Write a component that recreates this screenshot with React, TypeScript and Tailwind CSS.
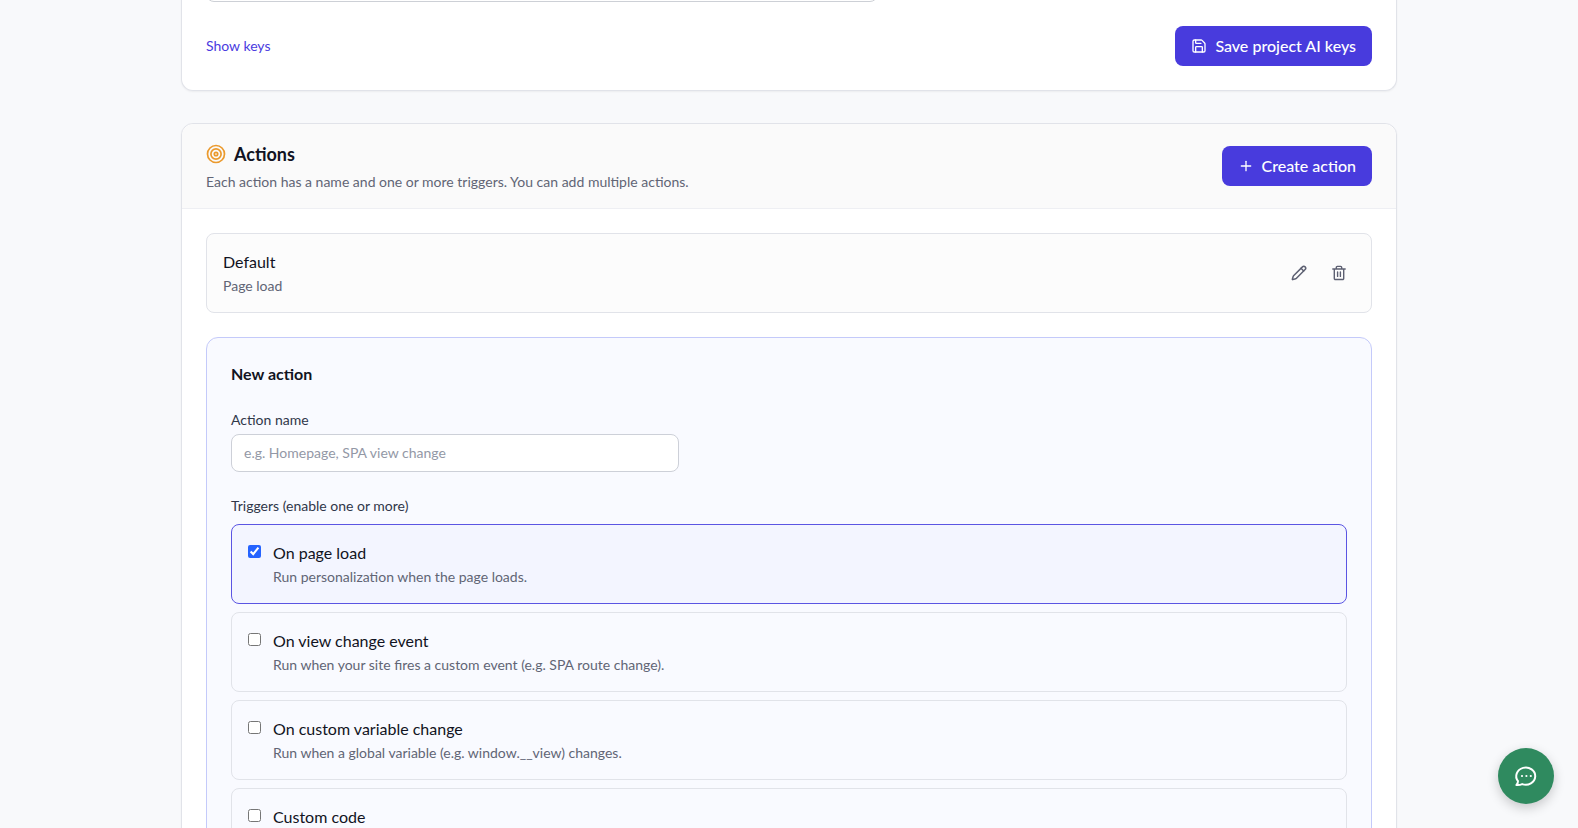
import { useState } from "react"
import { Pencil, Plus, Save } from "lucide-react"

type Trigger = {
  id: string
  title: string
  description?: string
}

const triggers: Trigger[] = [
  { id: "page-load", title: "On page load", description: "Run personalization when the page loads." },
  { id: "view-change", title: "On view change event", description: "Run when your site fires a custom event (e.g. SPA route change)." },
  { id: "variable-change", title: "On custom variable change", description: "Run when a global variable (e.g. window.__view) changes." },
  { id: "custom-code", title: "Custom code" },
]

const TargetIcon = () => (
  <svg className="size-5 text-[#eb9a2d]" viewBox="0 0 20 20" fill="none" stroke="currentColor" aria-hidden="true">
    <circle cx="10" cy="10" r="8.5" strokeWidth="1.7" />
    <circle cx="10" cy="10" r="5.1" strokeWidth="1.7" />
    <circle cx="10" cy="10" r="1.7" strokeWidth="1.7" />
  </svg>
)

const TrashIcon = () => (
  <svg className="size-4" viewBox="0 0 16 16" fill="none" stroke="currentColor" strokeWidth="1.4" strokeLinecap="round" strokeLinejoin="round" aria-hidden="true">
    <path d="M1.8 4h12.400M3.300 4v9.400a1.100 1.100 0 0 0 1.100 1.100h7.200a1.100 1.100 0 0 0 1.100-1.100V4M5.300 4V2.400a1 1 0 0 1 1-1h3.400a1 1 0 0 1 1 1V4M6.600 7v4.400M9.400 7v4.400" />
  </svg>
)

const ChatIcon = () => (
  <svg className="size-6" viewBox="0 0 24 24" fill="none" stroke="currentColor" strokeWidth="2" strokeLinecap="round" strokeLinejoin="round" aria-hidden="true">
    <path d="M2.400 21c1-.9 1.600-2.200 1.600-3.900A9.500 8.600 0 1 1 8.200 20.100c-1.700.8-3.600 1.100-5.800.9Z" />
    <path d="M8 12h.01M12.400 12h.01M16.800 12h.01" strokeWidth="2.2" />
  </svg>
)

const App = () => {
  const [name, setName] = useState("")
  const [apiKey, setApiKey] = useState("")
  const [showKeys, setShowKeys] = useState(false)
  const [enabled, setEnabled] = useState<string[]>(["page-load"])

  const toggle = (id: string) => {
    setEnabled(enabled.includes(id) ? enabled.filter(e => e !== id) : [...enabled, id])
  }

  return (
    <div className="h-screen overflow-y-auto [scrollbar-width:none] bg-[#f8f9fb] font-['Lato',sans-serif] text-[#111322]">
      <main className="mx-auto max-w-7xl px-8">
        <section className="rounded-b-xl border border-t-0 border-[#e1e3e9] bg-white px-6 pb-6 shadow-xs">
          {/* last key field, scrolled almost out of view */}
          <input
            type={showKeys ? "text" : "password"}
            aria-label="API key"
            value={apiKey}
            onChange={e => setApiKey(e.target.value)}
            className="-mt-9 block h-[38px] w-full max-w-2xl rounded-lg border border-[#cdd0d6] px-3 text-sm"
          />
          <div className="flex items-center justify-between pt-6">
            <button type="button" onClick={() => setShowKeys(!showKeys)} className="text-sm text-[#4a3ce0]">Show keys</button>
            <button type="button" className="flex h-10 items-center gap-2 rounded-lg bg-[#483bdd] px-4 font-medium text-white">
              <Save className="size-4" />
              Save project AI keys
            </button>
          </div>
        </section>

        <section className="my-8 rounded-xl border border-[#e1e3e9] bg-white shadow-xs">
          <header className="flex items-center justify-between rounded-t-xl border-b border-[#eeeff3] bg-[#fafafa] px-6 py-4">
            <div>
              <h2 className="flex items-center gap-2 text-lg leading-7 font-bold">
                <TargetIcon />
                Actions
              </h2>
              <p className="mt-1 text-sm text-[#616575]">Each action has a name and one or more triggers. You can add multiple actions.</p>
            </div>
            <button type="button" className="flex h-10 items-center gap-2 rounded-lg bg-[#483bdd] px-4 font-medium text-white">
              <Plus className="size-4" />
              Create action
            </button>
          </header>

          <div className="p-6">
            <div className="flex items-center justify-between rounded-lg border border-[#e1e3e9] bg-[#fcfcfc] p-4">
              <div>
                <p>Default</p>
                <p className="mt-0.5 text-sm text-[#616575]">Page load</p>
              </div>
              <div className="flex gap-2 text-[#5d6072]">
                <button type="button" aria-label="Edit action" className="p-2"><Pencil className="size-4" strokeWidth={2.2} /></button>
                <button type="button" aria-label="Delete action" className="p-2"><TrashIcon /></button>
              </div>
            </div>

            <form className="mt-6 rounded-xl border border-[#c4cafa] bg-[#f9faff] p-6" onSubmit={e => e.preventDefault()}>
              <h3 className="font-bold">New action</h3>
              <div className="mt-6">
                <label htmlFor="action-name" className="block text-sm text-[#30374a]">Action name</label>
                <input
                  id="action-name"
                  type="text"
                  value={name}
                  onChange={e => setName(e.target.value)}
                  placeholder="e.g. Homepage, SPA view change"
                  className="mt-1 block w-full max-w-md rounded-lg border border-[#cdd0d8] bg-white px-3 py-2 text-sm placeholder:text-[#9398a6]"
                />
              </div>
              <fieldset className="mt-6">
                <legend className="text-sm text-[#30374a]">Triggers (enable one or more)</legend>
                <div className="mt-2 flex flex-col gap-2">
                  {triggers.map(t => (
                    <label
                      key={t.id}
                      htmlFor={t.id}
                      className={`flex items-start gap-3 rounded-lg border p-4 ${enabled.includes(t.id) ? "border-[#5b55e3] bg-[#f3f5ff]" : "border-[#e1e3e9]"}`}
                    >
                      <input
                        id={t.id}
                        type="checkbox"
                        checked={enabled.includes(t.id)}
                        onChange={() => toggle(t.id)}
                        className="mt-1 size-[13px] accent-[#2563ff]"
                      />
                      <span>
                        <span className="block">{t.title}</span>
                        {t.description && <span className="mt-0.5 block text-sm text-[#616575]">{t.description}</span>}
                      </span>
                    </label>
                  ))}
                </div>
              </fieldset>
            </form>
          </div>
        </section>
      </main>

      <button type="button" aria-label="Open chat" className="fixed right-6 bottom-6 flex size-14 items-center justify-center rounded-full bg-[#2f8a5f] text-white shadow-[0_4px_12px_rgba(0,0,0,0.2)]">
        <ChatIcon />
      </button>
    </div>
  )
}

export default App
